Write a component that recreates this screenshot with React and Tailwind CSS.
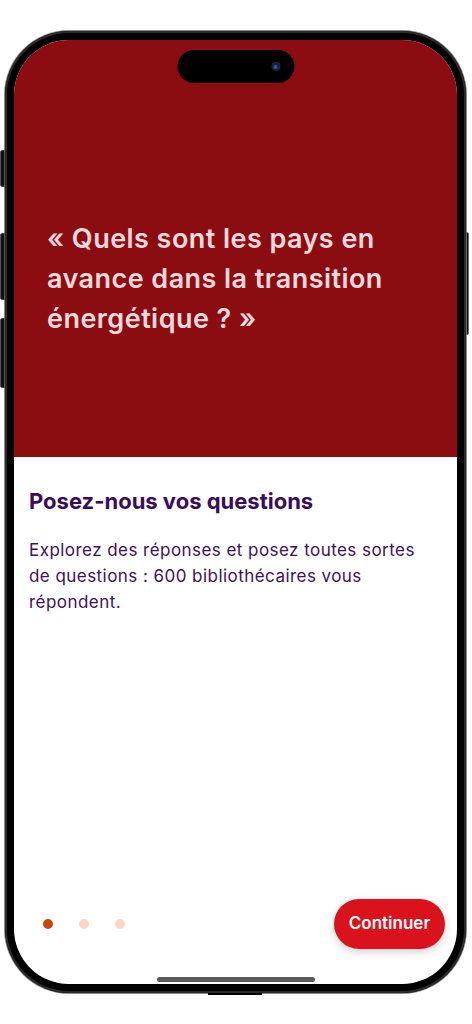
const Dot = ({ active }) => (
  <span
    className={
      active
        ? 'block w-[10px] h-[10px] rounded-full bg-[#c9470b]'
        : 'block w-[10px] h-[10px] rounded-full bg-[#fdd6c2]'
    }
  />
);

const App = () => {
  return (
    <div className="w-[472px] h-[1024px] bg-white pt-[31px] pl-[5px]" style={{ fontFamily: 'Inter, "Noto Sans", sans-serif' }}>
      <div className="relative w-[461px] h-[962px] rounded-[64px] bg-black p-[9px] shadow-[0_0_0_1px_#8a8a8a,inset_0_0_0_2px_#2b2b2b]">
        {/* side buttons */}
        <span className="absolute left-[-5px] top-[119px] w-[5px] h-[37px] rounded-l-[2px] bg-[#111] border border-[#555]" />
        <span className="absolute left-[-5px] top-[202px] w-[5px] h-[67px] rounded-l-[2px] bg-[#111] border border-[#555]" />
        <span className="absolute left-[-5px] top-[287px] w-[5px] h-[70px] rounded-l-[2px] bg-[#111] border border-[#555]" />
        <span className="absolute right-[-3px] top-[201px] w-[3px] h-[103px] rounded-r-[2px] bg-[#111] border border-[#666]" />
        <span className="absolute left-[203px] bottom-[-2px] w-[54px] h-[2px] bg-black" />

        <div className="relative h-full rounded-[55px] overflow-hidden bg-white flex flex-col">
          {/* dynamic island */}
          <div className="absolute top-[10px] left-1/2 -translate-x-1/2 w-[117px] h-[33px] rounded-full bg-black">
            <span className="absolute right-[14px] top-[12px] w-[9px] h-[9px] rounded-full bg-[#1c2533] flex items-center justify-center">
              <span className="w-[4px] h-[4px] rounded-full bg-[#2057b8]" />
            </span>
          </div>

          <div className="h-[417px] shrink-0 bg-[#8b0d12] pt-[179px] px-[33px]">
            <p className="text-[27px] leading-[40px] font-semibold text-[#fcd9dc] tracking-[0.45px]">
              « Quels sont les pays en avance dans la transition énergétique ? »
            </p>
          </div>

          <div className="flex-1 flex flex-col pt-[30px]">
            <div className="px-[15px]">
              <h1 className="text-[22px] leading-[28px] font-bold text-[#3b0b5c]">
                Posez-nous vos questions
              </h1>
              <p className="mt-[22px] text-[17px] leading-[26px] text-[#3b1160] tracking-[0.45px] pr-[12px]">
                Explorez des réponses et posez toutes sortes de questions : 600 bibliothécaires vous répondent.
              </p>
            </div>

            <div className="mt-auto flex items-center justify-between pl-[29px] pr-[12px] pb-[35px]">
              <div className="flex items-center gap-[26px]">
                <Dot active />
                <Dot />
                <Dot />
              </div>
              <button className="w-[111px] h-[50px] rounded-full bg-[#d9121b] text-white text-[17px] font-semibold shadow-[0_3px_8px_rgba(0,0,0,0.18)]">
                Continuer
              </button>
            </div>
          </div>

          <span className="absolute bottom-[2px] left-1/2 -translate-x-1/2 w-[158px] h-[5px] rounded-full bg-[#5a5a5a]" />
        </div>
      </div>
    </div>
  );
};

export default App;
